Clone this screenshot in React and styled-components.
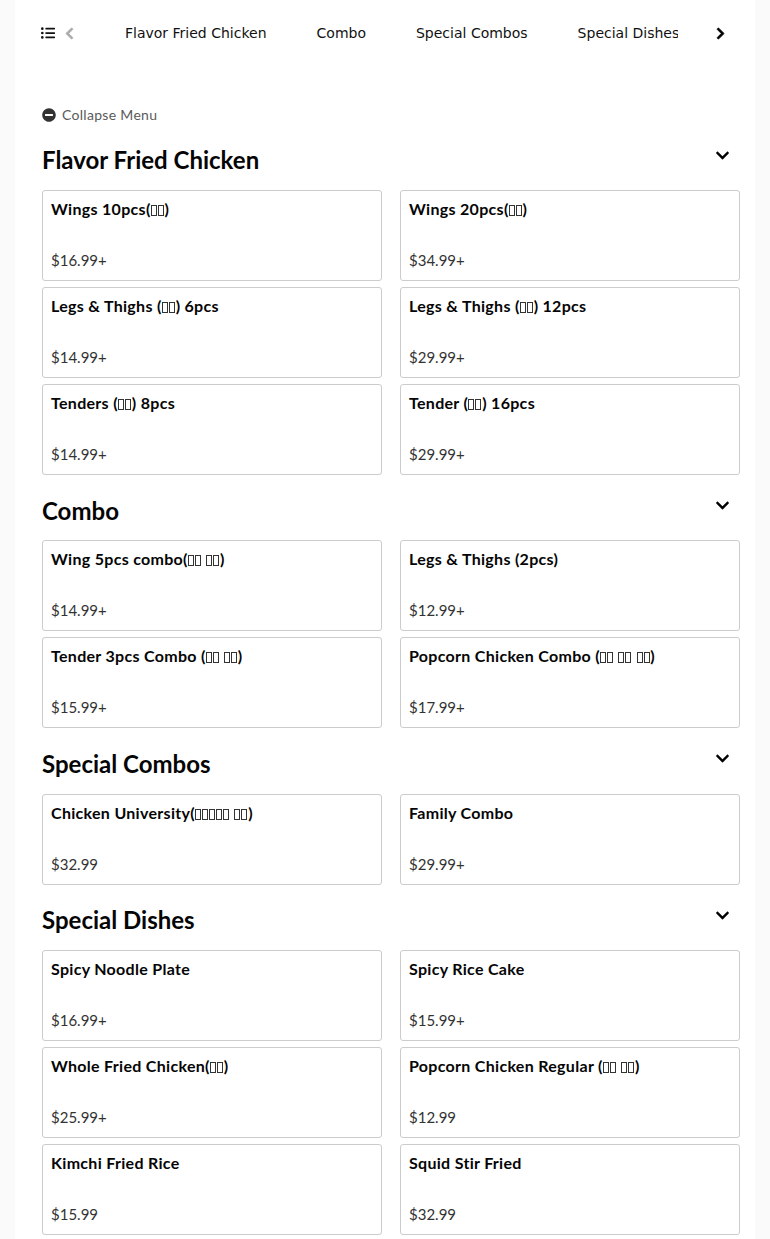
import React from 'react'
import styled, { createGlobalStyle } from 'styled-components'
import { FaListUl, FaChevronLeft, FaChevronRight, FaChevronDown, FaMinusCircle } from 'react-icons/fa'

const GlobalStyle = createGlobalStyle`
  html, body {
    margin: 0;
    padding: 0;
    background: #fafafa;
    overflow: hidden;
  }
`

const Page = styled.div`
  width: 740px;
  height: 1239px;
  margin-left: 15px;
  background: #fff;
  font-family: Lato, "Liberation Sans", sans-serif;
  overflow: hidden;
`

const NavBar = styled.div`
  height: 66px;
  display: flex;
  align-items: center;
  padding-left: 26px;
`

const NavIcons = styled.div`
  width: 59px;
  display: flex;
  align-items: center;
  gap: 8px;
  flex-shrink: 0;
`

const Tabs = styled.div`
  width: 578px;
  display: flex;
  overflow: hidden;
  flex-shrink: 0;
`

const Tab = styled.div`
  padding: 0 25px;
  font-family: "DejaVu Sans", sans-serif;
  font-size: 14px;
  color: #111;
  white-space: nowrap;
  flex-shrink: 0;
`

const NextButton = styled.div`
  margin-left: 36px;
  display: flex;
`

const Content = styled.div`
  padding: 40px 15px 0 27px;
`

const CollapseToggle = styled.div`
  display: flex;
  align-items: center;
  gap: 6px;
  margin-bottom: 0.6px;
  font-size: 14px;
  line-height: 18px;
  letter-spacing: 0.3px;
  color: #5a5a5a;
`

const SectionHead = styled.div`
  display: flex;
  justify-content: space-between;
  align-items: flex-start;
  box-sizing: border-box;
  height: 65.4px;
  padding: 20.6px 10px 0 0;

  svg {
    margin-top: 2.4px;
  }
`

const SectionTitle = styled.h2`
  margin: 0;
  font-size: 24px;
  line-height: 30px;
  font-weight: 700;
  color: #050505;
`

const Grid = styled.div`
  display: grid;
  grid-template-columns: 340px 340px;
  column-gap: 18px;
  row-gap: 6px;
`

const Card = styled.div`
  height: 91px;
  box-sizing: border-box;
  padding: 8px 8px 10px;
  border: 1px solid #ccc;
  border-radius: 3px;
  display: flex;
  flex-direction: column;
  justify-content: space-between;
`

const ItemName = styled.div`
  font-size: 16px;
  line-height: 20px;
  font-weight: 700;
  letter-spacing: 0.3px;
  color: #050505;
`

// the Korean glyphs are missing in the picture, they show as empty boxes
const Tofu = styled.span`
  display: inline-block;
  box-sizing: border-box;
  width: 6px;
  height: 11px;
  margin: 0 0.75px 0 0.25px;
  border: 1px solid #333;
  vertical-align: -1px;
`

const ItemPrice = styled.div`
  font-size: 15px;
  line-height: 20px;
  color: #333;
`

const menu = [
  {
    title: 'Flavor Fried Chicken',
    items: [
      ['Wings 10pcs(□□)', '$16.99+'],
      ['Wings 20pcs(□□)', '$34.99+'],
      ['Legs & Thighs (□□) 6pcs', '$14.99+'],
      ['Legs & Thighs (□□) 12pcs', '$29.99+'],
      ['Tenders (□□) 8pcs', '$14.99+'],
      ['Tender (□□) 16pcs', '$29.99+'],
    ],
  },
  {
    title: 'Combo',
    items: [
      ['Wing 5pcs combo(□□ □□)', '$14.99+'],
      ['Legs & Thighs (2pcs)', '$12.99+'],
      ['Tender 3pcs Combo (□□ □□)', '$15.99+'],
      ['Popcorn Chicken Combo (□□ □□ □□)', '$17.99+'],
    ],
  },
  {
    title: 'Special Combos',
    items: [
      ['Chicken University(□□□□□ □□)', '$32.99'],
      ['Family Combo', '$29.99+'],
    ],
  },
  {
    title: 'Special Dishes',
    items: [
      ['Spicy Noodle Plate', '$16.99+'],
      ['Spicy Rice Cake', '$15.99+'],
      ['Whole Fried Chicken(□□)', '$25.99+'],
      ['Popcorn Chicken Regular (□□ □□)', '$12.99'],
      ['Kimchi Fried Rice', '$15.99'],
      ['Squid Stir Fried', '$32.99'],
    ],
  },
]

const renderName = name =>
  name.split(/(□)/).map((part, i) => (part === '□' ? <Tofu key={i} /> : part))

const App = () => (
  <Page>
    <GlobalStyle />
    <NavBar>
      <NavIcons>
        <FaListUl size={14} color="#111" />
        <FaChevronLeft size={13} color="#aaa" stroke="#aaa" strokeWidth={30} />
      </NavIcons>
      <Tabs>
        {menu.map(section => (
          <Tab key={section.title}>{section.title}</Tab>
        ))}
      </Tabs>
      <NextButton>
        <FaChevronRight size={13} color="#000" stroke="#000" strokeWidth={30} />
      </NextButton>
    </NavBar>
    <Content>
      <CollapseToggle>
        <FaMinusCircle size={14} color="#333" />
        Collapse Menu
      </CollapseToggle>
      {menu.map(section => (
        <div key={section.title}>
          <SectionHead>
            <SectionTitle>{section.title}</SectionTitle>
            <FaChevronDown size={15} color="#000" />
          </SectionHead>
          <Grid>
            {section.items.map(([name, price]) => (
              <Card key={name}>
                <ItemName>{renderName(name)}</ItemName>
                <ItemPrice>{price}</ItemPrice>
              </Card>
            ))}
          </Grid>
        </div>
      ))}
    </Content>
  </Page>
)

export default App
